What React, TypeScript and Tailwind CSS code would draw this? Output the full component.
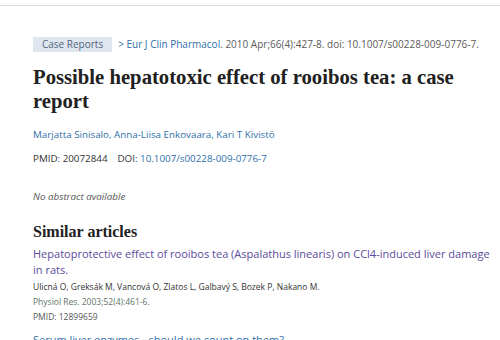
export default function App() {
  const sans = { fontFamily: '"Open Sans", "Noto Sans", sans-serif' }
  const serif = { fontFamily: '"Liberation Serif", "DejaVu Serif", serif' }

  return (
    <div className="h-[340px] w-[500px] overflow-hidden bg-white" style={sans}>
      <div className="mt-[5px] h-px w-full bg-[#dcdcdc]" />

      <div className="pl-[33px] pr-[6px] pt-[31px]">
        {/* Citation line */}
        <div className="flex items-center whitespace-nowrap text-[10px] leading-[15px] text-[#5b5b5b]">
          <span className="bg-[#dfe6ef] px-[9px] text-[#52657c]">Case Reports</span>
          <span className="ml-[6px] text-[#2f6fa8]">&gt; Eur J Clin Pharmacol</span>
          <span>. 2010 Apr;66(4):427-8. doi: 10.1007/s00228-009-0776-7.</span>
        </div>

        {/* Title */}
        <h1
          className="mt-[13px] max-w-[430px] text-[20.7px] font-bold leading-[24px] text-[#212121]"
          style={serif}
        >
          Possible hepatotoxic effect of rooibos tea: a case report
        </h1>

        {/* Authors */}
        <div className="mt-[14px] text-[9.8px] leading-[15px] text-[#2f6fa8]">
          Marjatta Sinisalo, Anna-Liisa Enkovaara, Kari T Kivistö
        </div>

        <div className="mt-[9px] flex gap-[10px] text-[9.8px] leading-[15px] text-[#333]">
          <span>PMID: 20072844</span>
          <span>
            DOI: <span className="text-[#2f6fa8]">10.1007/s00228-009-0776-7</span>
          </span>
        </div>

        <div className="mt-[23px] text-[9.8px] italic leading-[15px] text-[#555]">
          No abstract available
        </div>

        {/* Similar articles */}
        <h2
          className="mt-[18px] text-[16px] font-bold leading-[20px] text-[#212121]"
          style={serif}
        >
          Similar articles
        </h2>

        <div className="mt-[4px]">
          <div className="text-[11px] leading-[16px] text-[#5a4a9b]">
            Hepatoprotective effect of rooibos tea (Aspalathus linearis) on CCl4-induced liver damage in rats.
          </div>
          <div className="mt-[1px] text-[8.5px] leading-[15px] text-[#333]">
            Ulicná O, Greksák M, Vancová O, Zlatos L, Galbavý S, Bozek P, Nakano M.
          </div>
          <div className="text-[8.5px] leading-[15px] text-[#5d7565]">
            Physiol Res. 2003;52(4):461-6.
          </div>
          <div className="text-[8.5px] leading-[15px] text-[#555]">PMID: 12899659</div>
        </div>

        <div className="mt-[8px] text-[11px] leading-[16px] text-[#2f6fa8]">
          Serum liver enzymes - should we count on them?
        </div>
      </div>
    </div>
  )
}
